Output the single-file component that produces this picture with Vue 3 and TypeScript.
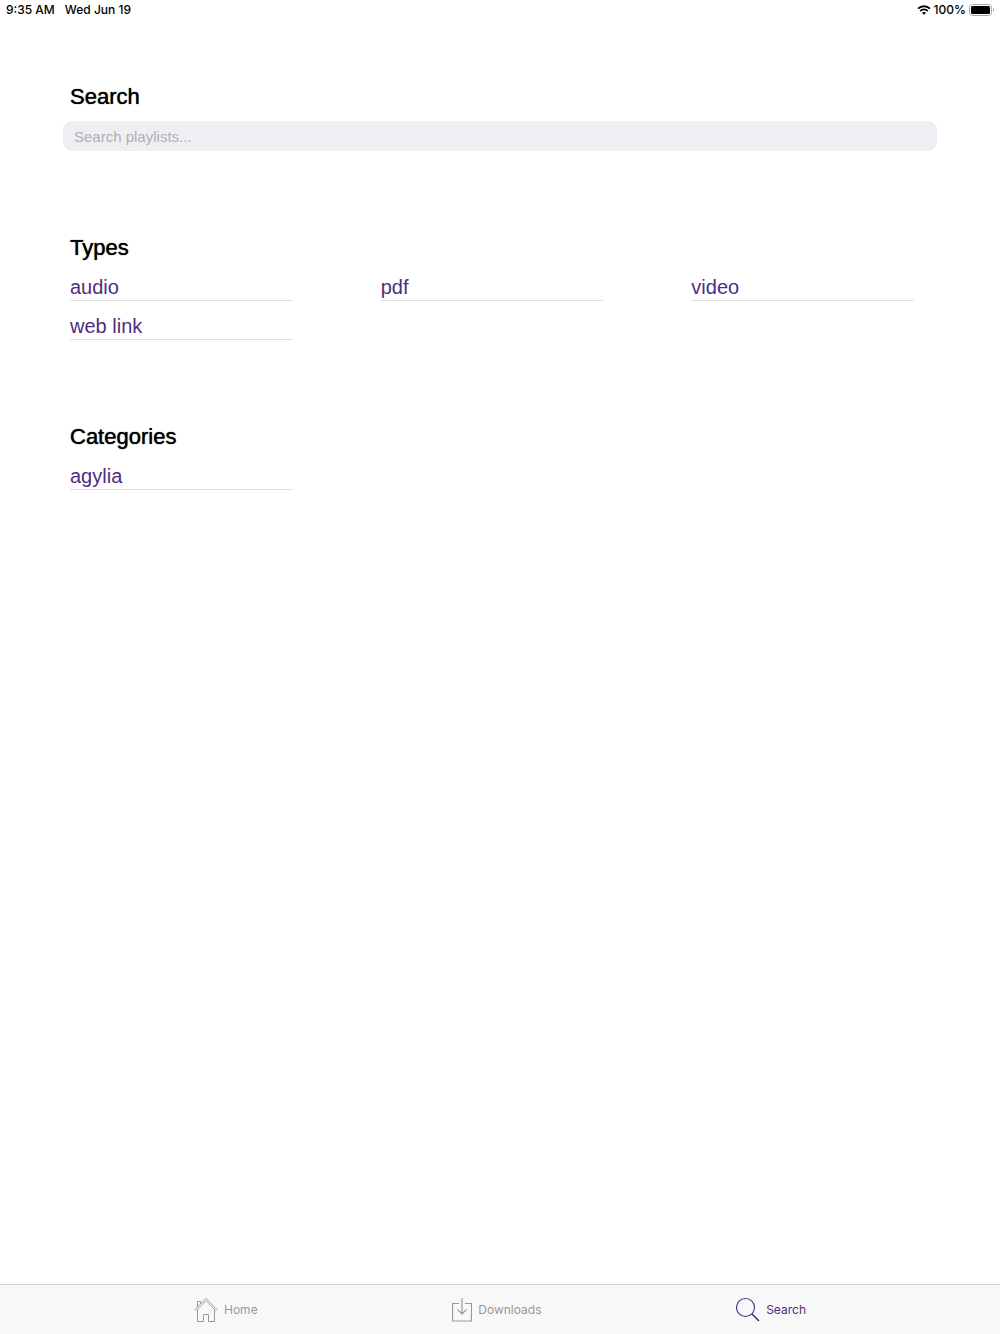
<script setup lang="ts">
import { ref } from 'vue'

type Tab = 'home' | 'downloads' | 'search'

interface Group {
  title: string
  items: string[]
}

const query = ref('')
const active = ref<Tab>('search')

const groups: Group[] = [
  { title: 'Types', items: ['audio', 'pdf', 'video', 'web link'] },
  { title: 'Categories', items: ['agylia'] },
]
</script>

<template>
  <div class="screen">
    <header class="status">
      <div class="status-side">
        <span>9:35 AM</span>
        <span>Wed Jun 19</span>
      </div>
      <div class="status-side status-right">
        <svg class="wifi" viewBox="0 0 14 10" aria-label="Wi-Fi">
          <path d="M1 3.6C4.4.4 9.6.4 13 3.6" fill="none" stroke="#000" stroke-width="1.9" />
          <path d="M3.2 6C5.4 4 8.6 4 10.8 6" fill="none" stroke="#000" stroke-width="1.8" />
          <path d="M7 9.8 4.9 7.7C6.1 6.7 7.9 6.7 9.1 7.7Z" fill="#000" />
        </svg>
        <span>100%</span>
        <svg class="battery" viewBox="0 0 26 12" aria-label="Battery full">
          <rect x=".5" y=".5" width="22" height="11" rx="3" fill="#fff" stroke="#a5a5a5" />
          <rect x="2" y="2" width="19" height="8" rx="1.5" fill="#000" />
          <path d="M24 4.2c1.6.6 1.6 3 0 3.6Z" fill="#a5a5a5" />
        </svg>
      </div>
    </header>

    <main class="content">
      <section class="section">
        <h2><label for="search">Search</label></h2>
        <input id="search" v-model="query" class="field" type="text" placeholder="Search playlists..." />
      </section>

      <section v-for="group in groups" :key="group.title" class="section">
        <h2>{{ group.title }}</h2>
        <ul class="grid">
          <li v-for="item in group.items" :key="item">
            <a href="#">{{ item }}</a>
          </li>
        </ul>
      </section>
    </main>

    <nav class="tabs">
      <div class="tab-row">
        <button type="button" class="tab" :class="{ active: active === 'home' }" @click="active = 'home'">
          <svg class="icon" viewBox="0 0 24 26" fill="none" stroke="currentColor">
            <path d="M.6 13.1 12 1.4l11.4 11.7M3.5 10V4.5h3v2.200M3.500 12.500V24.500H9.500V17.500h5V24.500h6V12.500" />
            <path d="M2.400 13.700 12 3.900l9.600 9.800" stroke-width=".8" />
          </svg>
          Home
        </button>
        <button type="button" class="tab" :class="{ active: active === 'downloads' }" @click="active = 'downloads'">
          <svg class="icon icon-download" viewBox="0 0 20 26" fill="none" stroke="currentColor">
            <path d="M7 6.500H.5v17.500h19V6.500H13M10 1v15.500M5.500 12.500l4.500 4.500 4.500-4.500" stroke-width="1.200" />
          </svg>
          Downloads
        </button>
        <button type="button" class="tab" :class="{ active: active === 'search' }" @click="active = 'search'">
          <svg class="icon" viewBox="0 0 24 26" fill="none" stroke="currentColor">
            <circle cx="9.500" cy="10.500" r="9" stroke-width="1.100" />
            <path d="m16 17 7 7" stroke-width="1.600" />
          </svg>
          Search
        </button>
      </div>
    </nav>
  </div>
</template>

<style>
body {
  margin: 0;
  background: #fff;
}
</style>

<style scoped>
.screen {
  display: flex;
  flex-direction: column;
  min-height: 100vh;
  font-family: "Liberation Sans", Arial, sans-serif;
  color: #000;
}

.status {
  display: flex;
  justify-content: space-between;
  padding: 0 5px 0 6px;
  font: 500 12px/20px Inter, sans-serif;
}

.status-side {
  display: flex;
  align-items: center;
  gap: 10px;
}

.status-right {
  gap: 3px;
}

.wifi {
  width: 14px;
  height: 10px;
}

.battery {
  width: 26px;
  height: 12px;
}

.content {
  flex: 1;
  display: flex;
  flex-direction: column;
  gap: 83px;
  padding: 63px 63px 0;
}

h2 {
  margin: 0;
  padding-left: 7px;
  font-size: 22px;
  line-height: 28px;
  font-weight: 400;
  text-shadow: 0 0 1px #000;
}

.field {
  display: block;
  box-sizing: border-box;
  width: 100%;
  height: 30px;
  margin-top: 10px;
  padding: 1px 11px 0;
  border: 0;
  border-radius: 9px;
  outline: 0;
  background: #efeef3;
  color: #000;
  font: 15px/20px "Liberation Sans", Arial, sans-serif;
}

.field::placeholder {
  color: #b0b0b3;
  opacity: 1;
}

.grid {
  display: grid;
  grid-template-columns: repeat(3, 1fr);
  gap: 13px 88px;
  margin: 13px 23px 0 7px;
  padding: 0;
  list-style: none;
}

.grid a {
  display: block;
  padding-bottom: 1px;
  border-bottom: 1px solid #e0e0e0;
  color: #4f2d7f;
  font-size: 20px;
  line-height: 24px;
  text-decoration: none;
}

.tabs {
  padding: 0 24px;
  border-top: 1px solid #d2d2d2;
  background: #f8f8f8;
}

.tab-row {
  display: flex;
  justify-content: space-between;
  align-items: center;
  max-width: 612px;
  height: 49px;
  margin: 0 auto;
}

.tab {
  display: flex;
  align-items: center;
  gap: 6px;
  padding: 0;
  border: 0;
  background: none;
  color: #999;
  font: 400 12px/20px Inter, sans-serif;
}

.tab.active {
  color: #4f2d7f;
}

.icon {
  width: 24px;
  height: 26px;
}

.icon-download {
  width: 20px;
}
</style>
